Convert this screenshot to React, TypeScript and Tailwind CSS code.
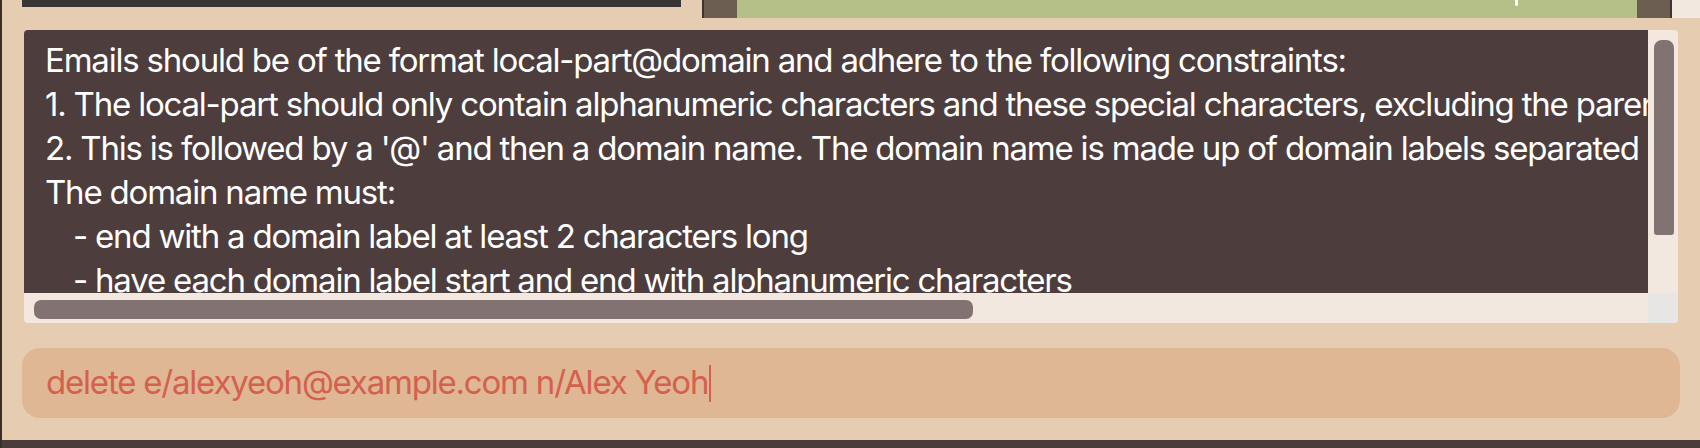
import React from "react";

const lines: { text: string; indent?: boolean }[] = [
  { text: "Emails should be of the format local-part@domain and adhere to the following constraints:" },
  { text: "1. The local-part should only contain alphanumeric characters and these special characters, excluding the parentheses, (+_.-). The local-part may not start or end with any special characters." },
  { text: "2. This is followed by a '@' and then a domain name. The domain name is made up of domain labels separated by periods." },
  { text: "The domain name must:" },
  { text: "- end with a domain label at least 2 characters long", indent: true },
  { text: "- have each domain label start and end with alphanumeric characters", indent: true },
  { text: "- have each domain label consist of alphanumeric characters, separated only by hyphens, if any.", indent: true },
];

export default function App() {
  return (
    <div
      className="w-[1700px] h-[448px] flex flex-col bg-[#e6cdb2] border-l-2 border-[#3a2e28] overflow-hidden"
      style={{ fontFamily: 'Inter, "Liberation Sans", Arial, sans-serif' }}
    >
      {/* top: ends of the list panels above */}
      <div className="flex h-[18px] shrink-0">
        <div className="ml-[20px] w-[659px] h-[7px] bg-[#383535]" />
        <div className="ml-[21px] flex h-[18px] w-[970px] border-x-2 border-[#3f3434]">
          <div className="w-[33px] bg-[#6b5e51]" />
          <div className="flex-1 bg-[#b5c088] flex justify-end pr-[119px]">
            <div className="w-[3px] h-[6px] bg-white rounded-b-sm" />
          </div>
          <div className="w-[33px] bg-[#6b5e51]" />
        </div>
        <div className="flex-1 bg-[#f2e8df]" />
      </div>

      {/* result display */}
      <div className="mt-[12px] ml-[22px] w-[1654px] grid grid-cols-[1624px_30px] grid-rows-[263px_30px] shrink-0">
        <div className="bg-[#4d3d3d] rounded-tl-[4px] overflow-hidden pl-[21px] pt-[8px]">
          {lines.map((l, i) => (
            <div
              key={i}
              className={`whitespace-pre text-[33px] leading-[44px] text-white tracking-[-1.2px] ${
                l.indent ? "pl-[28px]" : ""
              }`}
            >
              {l.text}
            </div>
          ))}
        </div>
        <div className="bg-[#f2e8df] rounded-tr-[4px] pl-[6px] pr-[4px] pt-[10px]">
          <div className="h-[195px] bg-[#837272] rounded-t-[8px] rounded-b-[3px]" />
        </div>
        <div className="bg-[#f2e8df] rounded-bl-[4px] pl-[10px] pt-[7px]">
          <div className="w-[939px] h-[19px] bg-[#837272] rounded-[7px]" />
        </div>
        <div className="bg-[#e8e6e4] rounded-br-[3px]" />
      </div>

      {/* command box */}
      <div className="mt-[25px] ml-[20px] w-[1658px] h-[70px] shrink-0 rounded-[18px] bg-[#dfb794] flex items-center pl-[24px]">
        <span className="text-[33px] text-[#d4604e] tracking-[-1.2px]">
          delete e/alexyeoh@example.com n/Alex Yeoh
        </span>
        <span className="ml-[1px] w-[1.5px] h-[37px] bg-[#d4604e]" />
      </div>

      <div className="mt-auto h-[8px] bg-[#4b3c3c] shrink-0" />
    </div>
  );
}
